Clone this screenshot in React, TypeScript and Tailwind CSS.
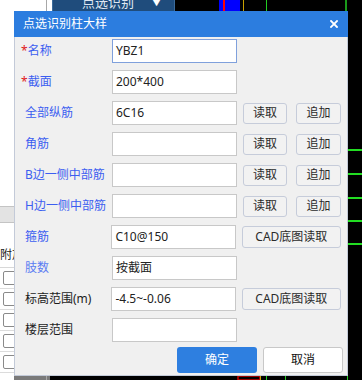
import React from 'react'

const font = { fontFamily: '"Noto Sans", "Noto Sans CJK SC", sans-serif' }

type Row = {
  label: string
  required?: boolean
  tone: 'blue' | 'light' | 'black'
  value?: string
  focused?: boolean
  actions?: 'pair' | 'cad'
}

const rows: Row[] = [
  { label: '名称', required: true, tone: 'blue', value: 'YBZ1', focused: true },
  { label: '截面', required: true, tone: 'blue', value: '200*400' },
  { label: '全部纵筋', tone: 'blue', value: '6C16', actions: 'pair' },
  { label: '角筋', tone: 'blue', actions: 'pair' },
  { label: 'B边一侧中部筋', tone: 'blue', actions: 'pair' },
  { label: 'H边一侧中部筋', tone: 'blue', actions: 'pair' },
  { label: '箍筋', tone: 'blue', value: 'C10@150', actions: 'cad' },
  { label: '肢数', tone: 'light', value: '按截面' },
  { label: '标高范围(m)', tone: 'black', value: '-4.5~-0.06', actions: 'cad' },
  { label: '楼层范围', tone: 'black' },
]

const toneClass = {
  blue: 'text-[#3c5ef0]',
  light: 'text-[#5b7cf2]',
  black: 'text-[#1c1c1c]',
}

function SmallButton({ children, className = '' }: { children: React.ReactNode; className?: string }) {
  return (
    <button className={`h-[21px] flex items-center justify-center rounded-[3px] border border-[#c6ccda] bg-[#f2f2f2] text-[12px] text-[#2a2a2a] leading-none ${className}`}>
      {children}
    </button>
  )
}

// list panel on the left, mostly hidden behind the dialog
function LeftPanel() {
  return (
    <div className="w-[47px] h-full bg-white border-r border-[#a8a8a8] flex flex-col shrink-0">
      <div className="h-[206px]" />
      <div className="h-[17px] bg-[#e3e3e3] border-t border-b border-[#c4c4c4]" />
      <div className="h-[45px] flex items-end pb-[6px] border-b border-[#d8d8d8] text-[12px] text-[#222] leading-none">
        附加
      </div>
      {[0, 1, 2, 3, 4].map((i) => (
        <div key={i} className="h-[21px] flex items-center pl-[3px] border-b border-[#dcdcdc]">
          <div className="w-[14px] h-[14px] rounded-[2px] border border-[#8a8a8a] bg-white" />
        </div>
      ))}
      <div className="mt-auto h-[4px] ml-[14px] bg-[#7a7a7a]" />
    </div>
  )
}

function Toolbar() {
  return (
    <div className="w-[128px] h-full flex flex-col shrink-0">
      <div className="h-[18px] bg-white">
        <div className="ml-[5px] -mt-[12px] h-[30px] bg-[#1f4c7c] border border-[#3b6b9c] flex items-center text-[#dfe7f1] text-[13px]">
          <span className="ml-[29px]">点选识别</span>
          <span className="ml-[18px] text-[9px] text-white">▼</span>
        </div>
      </div>
      <div className="mt-auto h-[4px] w-[3px] bg-[#7a7a7a]" />
    </div>
  )
}

function Canvas() {
  return (
    <div className="flex-1 h-full bg-black">
      <svg width="187" height="380" viewBox="0 0 187 380">
        <rect x="44" y="0" width="21" height="360" fill="#0000ff" />
        <rect x="48" y="0" width="2" height="360" fill="#ff0000" />
        <rect x="68" y="0" width="1" height="360" fill="#c8a000" />
        <rect x="91" y="0" width="1" height="380" fill="#22cc22" />
        <rect x="170" y="0" width="2" height="360" fill="#1a9a1a" />
        {[149, 173, 197, 220, 243].map((y) => (
          <rect key={y} x="173" y={y} width="14" height="2" fill="#22dd22" />
        ))}
        <rect x="-87" y="376" width="1" height="4" fill="#22cc22" />
        <rect x="-35" y="376" width="1" height="4" fill="#22cc22" />
        <rect x="110" y="376" width="1" height="4" fill="#22cc22" />
        <rect x="172" y="376" width="1" height="4" fill="#22cc22" />
        <rect x="63" y="376" width="22" height="4" fill="none" stroke="#cc0000" strokeWidth="1.5" />
        <rect x="85" y="376" width="1" height="4" fill="#c8a000" />
      </svg>
    </div>
  )
}

export default function App() {
  return (
    <div className="relative w-[362px] h-[380px] overflow-hidden bg-black" style={font}>
      <div className="flex h-full">
        <LeftPanel />
        <Toolbar />
        <Canvas />
      </div>

      {/* dialog */}
      <div className="absolute left-[14px] top-[11px] w-[334px] h-[365px] bg-[#f0f0f0] border border-[#c3cad8] flex flex-col">
        <div className="h-[26px] -mx-px -mt-px bg-[#2c7ddf] flex items-center justify-between pl-[9px] pr-[10px]">
          <span className="text-white text-[12px] leading-none">点选识别柱大样</span>
          <svg width="8" height="8" viewBox="0 0 8 8">
            <path d="M1 1L7 7M7 1L1 7" stroke="white" strokeWidth="1.8" strokeLinecap="square" />
          </svg>
        </div>

        <div className="flex flex-col gap-[7px] pt-[2px] px-[6px]">
          {rows.map((r) => (
            <div key={r.label} className="flex items-center h-[24px]">
              <div className={`w-[91px] text-[12px] leading-none ${toneClass[r.tone]} ${r.required ? '' : 'pl-[4px]'}`}>
                {r.required && <span className="text-[#e01818]">*</span>}
                {r.label}
              </div>
              <div
                className={`w-[125px] h-[24px] bg-white border flex items-center pl-[3px] text-[12px] text-[#222] ${
                  r.focused ? 'border-[#7fa0dc]' : 'border-[#c8c8c8]'
                }`}
              >
                {r.value}
              </div>
              {r.actions === 'pair' && (
                <div className="flex gap-[9px] ml-[6px]">
                  <SmallButton className="w-[44px]">读取</SmallButton>
                  <SmallButton className="w-[45px]">追加</SmallButton>
                </div>
              )}
              {r.actions === 'cad' && (
                <SmallButton className="ml-[6px] w-[100px] h-[22px]">CAD底图读取</SmallButton>
              )}
            </div>
          ))}
        </div>

        <div className="flex justify-end gap-[6px] pr-[4px] mt-[5px]">
          <button className="w-[80px] h-[26px] rounded-[3px] bg-[#2e7fe0] text-white text-[12px]">确定</button>
          <button className="w-[80px] h-[26px] rounded-[3px] bg-white border border-[#c8c8c8] text-[#111] text-[12px]">取消</button>
        </div>
      </div>
    </div>
  )
}
